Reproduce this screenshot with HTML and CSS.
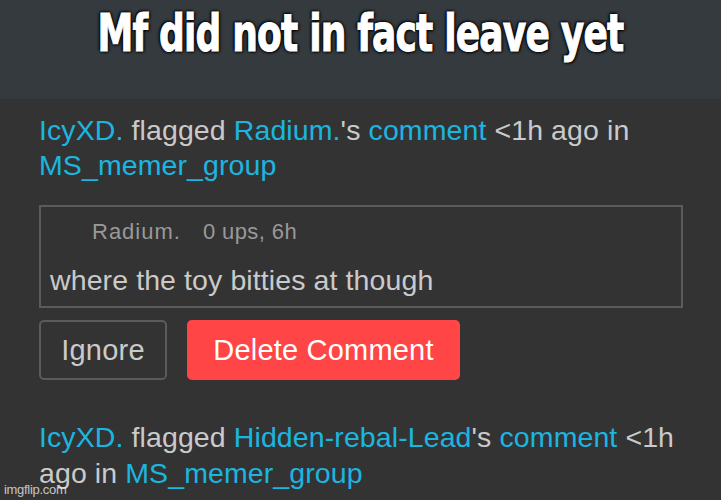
FILE: index.html
```html
<!DOCTYPE html>
<html>
<head>
<meta charset="utf-8">
<link rel="stylesheet" href="styles.css">
</head>
<body>
<header class="banner">
  <h1 class="caption">Mf did not in fact leave yet</h1>
</header>
<main class="feed">
  <p class="flag"><a class="lnk">IcyXD.</a> flagged <a class="lnk">Radium.</a>'s <a class="lnk">comment</a> &lt;1h ago in <a class="lnk">MS_memer_group</a></p>
  <div class="comment">
    <div class="meta"><span class="author">Radium.</span><span class="stats">0 ups, 6h</span></div>
    <div class="body">where the toy bitties at though</div>
  </div>
  <div class="actions">
    <button class="btn ignore">Ignore</button>
    <button class="btn delete">Delete Comment</button>
  </div>
  <p class="flag second"><a class="lnk">IcyXD.</a> flagged <a class="lnk">Hidden-rebal-Lead</a>'s <a class="lnk">comment</a> &lt;1h ago in <a class="lnk">MS_memer_group</a></p>
</main>
<div class="watermark">imgflip.com</div>
</body>
</html>
```
FILE: styles.css
```css
html, body {
  margin: 0;
  padding: 0;
  width: 721px;
  height: 500px;
  overflow: hidden;
  background: #333333;
  font-family: "Liberation Sans", Arial, sans-serif;
  position: relative;
}
.banner {
  height: 99px;
  background: #343a3e;
  display: flex;
  justify-content: center;
}
.caption {
  margin: 0;
  padding-top: 1px;
  font-family: "Liberation Sans Narrow", "DejaVu Sans Condensed", sans-serif;
  font-weight: bold;
  font-size: 40px;
  line-height: 50px;
  color: #fff;
  letter-spacing: -0.8px;
  -webkit-text-stroke: 0.8px #fff;
  transform: scaleY(1.27);
  transform-origin: top center;
  text-shadow: 0 0 3px #000, 0 0 3px #000, 1px 1px 2px #000, -1px -1px 2px #000;
}
.feed {
  padding: 14px 39px 0 39px;
}
.flag {
  margin: 0;
  font-size: 28.5px;
  line-height: 35px;
  color: #cacaca;
  letter-spacing: 0.1px;
}
.lnk {
  color: #1bb6e0;
}
.comment {
  margin-top: 22px;
  border: 2px solid #5b5b5b;
  height: 103px;
  box-sizing: border-box;
  width: 644px;
  padding: 12px 10px 0 9px;
}
.meta {
  display: flex;
  align-items: baseline;
  padding-left: 42px;
  color: #999999;
  font-size: 22px;
  line-height: 26px;
}
.author {
  letter-spacing: 1px;
  margin-right: 22px;
}
.stats {
  letter-spacing: 0.4px;
}
.body {
  margin-top: 18px;
  font-size: 28.5px;
  line-height: 35px;
  color: #cacaca;
  letter-spacing: 0.1px;
}
.actions {
  margin-top: 12px;
  display: flex;
  gap: 20px;
}
.btn {
  font-family: "Liberation Sans", Arial, sans-serif;
  font-size: 29px;
  letter-spacing: 0.2px;
  height: 60px;
  border-radius: 5px;
  padding: 0;
}
.ignore {
  width: 128px;
  background: transparent;
  border: 2px solid #5b5b5b;
  color: #cacaca;
}
.delete {
  width: 273px;
  background: #ff4545;
  border: none;
  color: #fff;
}
.second {
  margin-top: 39px;
  line-height: 36px;
}
.watermark {
  position: absolute;
  left: 4px;
  bottom: 3px;
  font-size: 13px;
  color: rgba(235,235,235,0.8);
  letter-spacing: -0.3px;
}
```
